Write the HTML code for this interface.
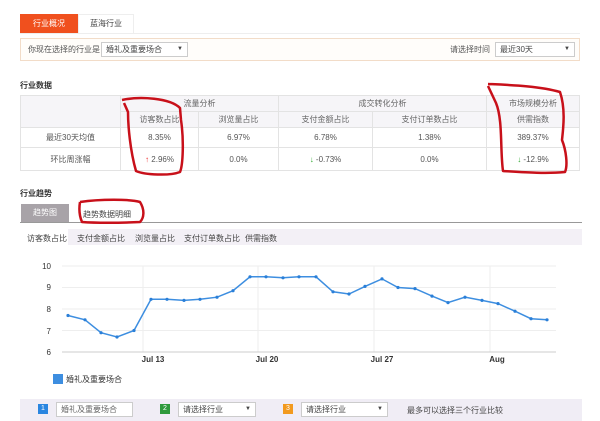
<!DOCTYPE html><html><head><meta charset="utf-8"><style>
*{margin:0;padding:0;box-sizing:border-box}
body{width:600px;height:421px;background:#fff;position:relative;overflow:hidden;font-family:"Liberation Sans","Noto Sans CJK SC",sans-serif;font-size:8px;color:#444}
.a{position:absolute}
.c{text-align:center}
table{border-collapse:collapse;position:absolute;left:20px;top:95px;width:560px;font-size:8px}
td{border:1px solid #e3e3e3;text-align:center;color:#555}
.h td{background:#f6f5f8;color:#666}
.sel{border:1px solid #ccc;background:#fff;height:15px;line-height:13px;padding-left:4px;font-size:8px;color:#444}
</style></head><body>
<div class="a" style="left:20px;top:14px;width:58px;height:19px;background:#f0501e;color:#fff;line-height:19px;text-align:center">行业概况</div>
<div class="a" style="left:78px;top:14px;width:56px;height:19px;border:1px solid #eee;border-bottom:none;line-height:18px;text-align:center">蓝海行业</div>
<div class="a" style="left:20px;top:33px;width:560px;height:1px;background:#eee"></div>
<div class="a" style="left:20px;top:38px;width:560px;height:23px;border:1px solid #f2dcc8;background:#fffdfa"></div>
<div class="a" style="left:28px;top:44px;color:#555">你现在选择的行业是</div>
<div class="a sel" style="left:101px;top:42px;width:87px">婚礼及重要场合<span style="position:absolute;right:4px;font-size:6px">▼</span></div>
<div class="a" style="left:450px;top:44px;color:#555">请选择时间</div>
<div class="a sel" style="left:495px;top:42px;width:80px">最近30天<span style="position:absolute;right:4px;font-size:6px">▼</span></div>
<div class="a" style="left:20px;top:80px;font-weight:bold;color:#333">行业数据</div>
<table>
<tr class="h" style="height:16px"><td rowspan="2" style="width:100px"></td><td colspan="2">流量分析</td><td colspan="2">成交转化分析</td><td>市场规模分析</td></tr>
<tr class="h" style="height:16px"><td style="width:78px">访客数占比</td><td style="width:80px">浏览量占比</td><td style="width:94px">支付金额占比</td><td style="width:114px">支付订单数占比</td><td>供需指数</td></tr>
<tr style="height:20px"><td>最近30天均值</td><td>8.35%</td><td>6.97%</td><td>6.78%</td><td>1.38%</td><td>389.37%</td></tr>
<tr style="height:23px"><td>环比周涨幅</td><td><span style="color:#e33">↑</span> 2.96%</td><td>0.0%</td><td><span style="color:#3a3">↓</span> -0.73%</td><td>0.0%</td><td><span style="color:#3a3">↓</span> -12.9%</td></tr>
</table>
<div class="a" style="left:20px;top:188px;font-weight:bold;color:#333">行业趋势</div>
<div class="a" style="left:21px;top:204px;width:48px;height:18px;background:#a8a3a8;color:#fff;line-height:18px;text-align:center">趋势图</div>
<div class="a" style="left:83px;top:209px">趋势数据明细</div>
<div class="a" style="left:20px;top:222px;width:562px;height:1px;background:#999"></div>
<div class="a" style="left:20px;top:229px;width:562px;height:16px;background:#f3f0f6"></div>
<div class="a" style="left:20px;top:229px;width:48px;height:16px;background:#fff"></div>
<div class="a" style="left:27px;top:233px;word-spacing:0">访客数占比</div>
<div class="a" style="left:77px;top:233px">支付金额占比</div>
<div class="a" style="left:135px;top:233px">浏览量占比</div>
<div class="a" style="left:184px;top:233px">支付订单数占比</div>
<div class="a" style="left:245px;top:233px">供需指数</div>
<svg class="a" style="left:0;top:0" width="600" height="421" font-family="Liberation Sans" font-size="8">
<g stroke="#eee" stroke-width="1">
<line x1="62" y1="266" x2="556" y2="266"/><line x1="62" y1="287.5" x2="556" y2="287.5"/><line x1="62" y1="309" x2="556" y2="309"/><line x1="62" y1="330.5" x2="556" y2="330.5"/>
<line x1="143" y1="266" x2="143" y2="352"/><line x1="258" y1="266" x2="258" y2="352"/><line x1="374" y1="266" x2="374" y2="352"/><line x1="490" y1="266" x2="490" y2="352"/>
</g>
<line x1="62" y1="352" x2="556" y2="352" stroke="#ccc"/>
<g fill="#333" text-anchor="end"><text x="51" y="269">10</text><text x="51" y="290">9</text><text x="51" y="312">8</text><text x="51" y="334">7</text><text x="51" y="355">6</text></g>
<g fill="#333" font-weight="bold" text-anchor="middle"><text x="153" y="362">Jul 13</text><text x="267" y="362">Jul 20</text><text x="382" y="362">Jul 27</text><text x="497" y="362">Aug</text></g>
<polyline fill="none" stroke="#3d8ee0" stroke-width="1.5" points="68,315.5 85,319.8 101,332.7 117,337 134,330.5 151,299.3 167,299.3 184,300.4 200,299.3 217,297.2 233,290.7 250,276.8 266,276.8 283,277.8 299,276.8 316,276.8 333,291.8 349,294 365,286.4 382,278.9 398,287.5 415,288.6 432,296.1 448,302.6 465,297.2 482,300.4 498,303.6 515,311.2 531,318.7 547,319.8"/>
<g fill="#2a7fd8">
<circle cx="68" cy="315.5" r="1.6"/><circle cx="85" cy="319.8" r="1.6"/><circle cx="101" cy="332.7" r="1.6"/><circle cx="117" cy="337" r="1.6"/><circle cx="134" cy="330.5" r="1.6"/><circle cx="151" cy="299.3" r="1.6"/><circle cx="167" cy="299.3" r="1.6"/><circle cx="184" cy="300.4" r="1.6"/><circle cx="200" cy="299.3" r="1.6"/><circle cx="217" cy="297.2" r="1.6"/><circle cx="233" cy="290.7" r="1.6"/><circle cx="250" cy="276.8" r="1.6"/><circle cx="266" cy="276.8" r="1.6"/><circle cx="283" cy="277.8" r="1.6"/><circle cx="299" cy="276.8" r="1.6"/><circle cx="316" cy="276.8" r="1.6"/><circle cx="333" cy="291.8" r="1.6"/><circle cx="349" cy="294" r="1.6"/><circle cx="365" cy="286.4" r="1.6"/><circle cx="382" cy="278.9" r="1.6"/><circle cx="398" cy="287.5" r="1.6"/><circle cx="415" cy="288.6" r="1.6"/><circle cx="432" cy="296.1" r="1.6"/><circle cx="448" cy="302.6" r="1.6"/><circle cx="465" cy="297.2" r="1.6"/><circle cx="482" cy="300.4" r="1.6"/><circle cx="498" cy="303.6" r="1.6"/><circle cx="515" cy="311.2" r="1.6"/><circle cx="531" cy="318.7" r="1.6"/><circle cx="547" cy="319.8" r="1.6"/>
</g>
<rect x="53" y="374" width="10" height="10" fill="#3d8ee0"/>
<text x="66" y="382" fill="#333">婚礼及重要场合</text>
<!-- red marker circles -->
<g fill="none" stroke="#c8101a" stroke-width="2.5" stroke-linejoin="round">
<path d="M122,100 C140,96 170,98 180,108 L181,120 C184,140 183,165 180,172 C170,176 145,175 136,171 C130,150 128,125 128,112 L124,103"/>
<path d="M488,84 C510,85 540,86 560,92 C566,110 563,130 562,140 C566,150 568,165 565,172 C545,174 520,172 503,171 C500,150 503,120 496,103 L488,86"/>
<path d="M80,202 C100,199 130,199 140,202 C145,210 144,218 140,222 C120,223 95,223 82,222 C79,215 79,208 80,202"/>
</g>
</svg>
<div class="a" style="left:20px;top:399px;width:562px;height:22px;background:#f0edf5"></div>
<div class="a" style="left:38px;top:404px;width:10px;height:10px;background:#2a86e0;color:#fff;font-size:7px;line-height:10px;text-align:center">1</div>
<div class="a sel" style="left:56px;top:402px;width:77px;color:#666">婚礼及重要场合</div>
<div class="a" style="left:160px;top:404px;width:10px;height:10px;background:#2f9a3c;color:#fff;font-size:7px;line-height:10px;text-align:center">2</div>
<div class="a sel" style="left:178px;top:402px;width:78px">请选择行业<span style="position:absolute;right:4px;font-size:6px">▼</span></div>
<div class="a" style="left:283px;top:404px;width:10px;height:10px;background:#f29a1e;color:#fff;font-size:7px;line-height:10px;text-align:center">3</div>
<div class="a sel" style="left:301px;top:402px;width:87px">请选择行业<span style="position:absolute;right:4px;font-size:6px">▼</span></div>
<div class="a" style="left:407px;top:405px">最多可以选择三个行业比较</div>
</body></html>
